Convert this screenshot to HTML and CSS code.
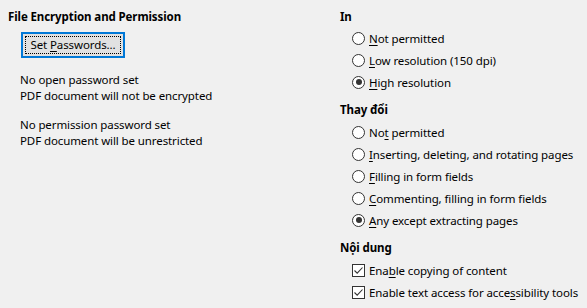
FILE: index.html
```html
<!DOCTYPE html>
<html>
<head>
<meta charset="utf-8">
<link rel="stylesheet" href="styles.css">
</head>
<body>
<div class="page">
  <div class="left">
    <div class="heading">File Encryption and Permission</div>
    <div class="btn-wrap"><button class="btn"><span class="focus">Set <u>P</u>asswords...</span></button></div>
    <div class="info">
      <div>No open password set</div>
      <div>PDF document will not be encrypted</div>
    </div>
    <div class="info">
      <div>No permission password set</div>
      <div>PDF document will be unrestricted</div>
    </div>
  </div>
  <div class="right">
    <div class="heading">In</div>
    <div class="group">
      <div class="row"><span class="radio"></span><span><u>N</u>ot permitted</span></div>
      <div class="row"><span class="radio"></span><span><u>L</u>ow resolution (150 dpi)</span></div>
      <div class="row"><span class="radio checked"></span><span><u>H</u>igh resolution</span></div>
    </div>
    <div class="heading sec">Thay đổi</div>
    <div class="group">
      <div class="row"><span class="radio"></span><span>No<u>t</u> permitted</span></div>
      <div class="row"><span class="radio"></span><span><u>I</u>nserting, deleting, and rotating pages</span></div>
      <div class="row"><span class="radio"></span><span><u>F</u>illing in form fields</span></div>
      <div class="row"><span class="radio"></span><span><u>C</u>ommenting, filling in form fields</span></div>
      <div class="row"><span class="radio checked"></span><span><u>A</u>ny except extracting pages</span></div>
    </div>
    <div class="heading sec">Nội dung</div>
    <div class="group">
      <div class="row"><span class="check"><svg width="13" height="13" viewBox="0 0 13 13"><path d="M2.5 6.5 L5.2 9.2 L10.5 3.5" fill="none" stroke="#333" stroke-width="1.1"/></svg></span><span>Ena<u>b</u>le copying of content</span></div>
      <div class="row"><span class="check"><svg width="13" height="13" viewBox="0 0 13 13"><path d="M2.5 6.5 L5.2 9.2 L10.5 3.5" fill="none" stroke="#333" stroke-width="1.1"/></svg></span><span>Enable text access for acce<u>s</u>sibility tools</span></div>
    </div>
  </div>
</div>
</body>
</html>
```
FILE: styles.css
```css
html, body {
  margin: 0;
  padding: 0;
  background: #f0f0f0;
}
body {
  font-family: "Noto Sans", "Open Sans", sans-serif;
  font-size: 11.5px;
  letter-spacing: -0.1px;
  color: #000;
  width: 587px;
  height: 308px;
  overflow: hidden;
  white-space: nowrap;
}
u {
  text-decoration: underline;
  text-underline-offset: 2px;
}
.page {
  display: flex;
  padding-top: 9px;
}
.left {
  width: 332px;
  padding-left: 8px;
}
.right {
  flex: 1;
}
.heading {
  font-weight: bold;
  line-height: 16px;
  height: 16px;
}
.heading.sec {
  margin-top: 9px;
  height: 17px;
}
.btn-wrap {
  margin-top: 7px;
  padding-left: 13px;
}
.btn {
  width: 104px;
  height: 26px;
  border: 2px solid #0078d7;
  background: #e1e1e1;
  font: inherit;
  letter-spacing: inherit;
  color: #000;
  padding: 2px;
  margin: 0;
  display: block;
  box-sizing: border-box;
}
.focus {
  display: block;
  border: 1px dotted #000;
  text-align: center;
  line-height: 16px;
  height: 16px;
}
.info {
  padding-left: 12px;
  line-height: 16px;
  margin-top: 14px;
}
.info + .info {
  margin-top: 13px;
}
.group {
  margin-top: 2px;
  padding-left: 12px;
}
.row {
  height: 22px;
  display: flex;
  align-items: center;
  gap: 4px;
}
.radio {
  width: 11px;
  height: 11px;
  border: 1px solid #333;
  border-radius: 50%;
  background: #fff;
  position: relative;
  flex: none;
}
.radio.checked::after {
  content: "";
  position: absolute;
  left: 2.5px;
  top: 2.5px;
  width: 6px;
  height: 6px;
  border-radius: 50%;
  background: #333;
}
.check {
  width: 13px;
  height: 13px;
  box-sizing: border-box;
  border: 1px solid #333;
  background: #fff;
  flex: none;
  display: flex;
}
.check svg {
  margin: -1px;
}
```
